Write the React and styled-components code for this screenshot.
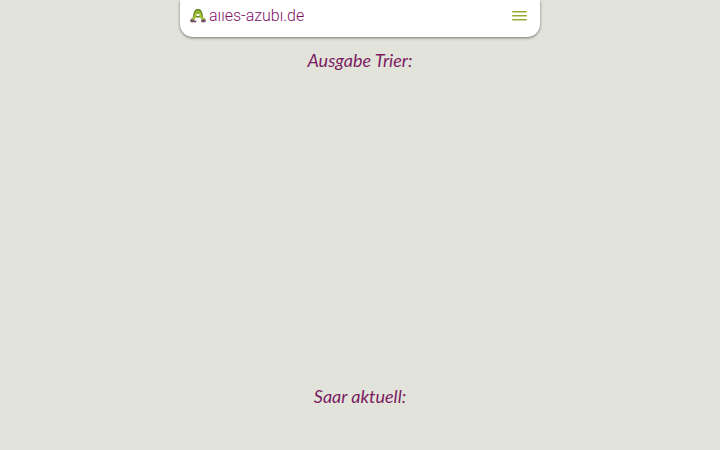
import React, { useState } from 'react';
import styled, { createGlobalStyle } from 'styled-components';

const GlobalStyle = createGlobalStyle`
  * {
    box-sizing: border-box;
  }

  body {
    margin: 0;
    background: #e2e4db;
    color: #7b1c62;
    font-family: Lato, sans-serif;
  }
`;

const Page = styled.div`
  display: flex;
  flex-direction: column;
  align-items: center;
  min-height: 100vh;
`;

const Header = styled.header`
  display: flex;
  align-items: center;
  justify-content: space-between;
  width: 50%;
  min-width: 280px;
  padding: 4px 13px 9px 10px;
  background: #fff;
  border-radius: 0 0 13px 13px;
  box-shadow: 0 1px 3px rgba(0, 0, 0, 0.5);
`;

const Brand = styled.a`
  display: flex;
  align-items: center;
  gap: 3px;
  color: #7f1169;
  text-decoration: none;
`;

const BrandName = styled.span`
  font-family: Roboto, sans-serif;
  font-size: 16px;
  font-weight: 300;
  line-height: 24px;
`;

const MenuButton = styled.button`
  display: flex;
  padding: 4px 0;
  border: none;
  background: transparent;
  color: #93ad2f;
  cursor: pointer;
`;

const Main = styled.main`
  width: 100%;
  padding-top: 11px;
`;

const Region = styled.section`
  & + & {
    margin-top: 312px;
  }
`;

const RegionTitle = styled.h2`
  margin: 0;
  font-size: 18px;
  font-style: italic;
  font-weight: 400;
  line-height: 24px;
  text-align: center;
`;

const regions = ['Ausgabe Trier:', 'Saar aktuell:'];

const LogoMark = () => (
  <svg width="16" height="14" viewBox="0 0 16 14" aria-hidden="true">
    <path d="M1 12 4 9 5 4Q6 1 8 1t3 3l1 5 3 3" fill="none" stroke="#688022" strokeWidth="2.6" strokeLinejoin="round" />
    <path d="M2 11 5 8 6 4Q7 2 8 2t2 2l1 4 3 3" fill="none" stroke="#a5c83b" strokeWidth="2" strokeLinejoin="round" />
    <path d="M6 7q2 2 4 0" fill="none" stroke="#668122" strokeWidth="1.3" />
    <circle cx="8" cy="3.5" r="1.5" fill="#82a52c" />
    <ellipse cx="2.3" cy="12" rx="2.3" ry="1.4" fill="#765069" />
    <ellipse cx="5" cy="12.5" rx="1.6" ry="1" fill="#765069" />
    <ellipse cx="13.4" cy="12" rx="2.5" ry="1.4" fill="#765069" />
  </svg>
);

const MenuIcon = () => (
  <svg width="15" height="12" viewBox="0 0 15 12" aria-hidden="true">
    <path d="M0.8 1.7h13.4M0.8 5.7h13.4M0.8 9.7h13.4" fill="none" stroke="currentColor" strokeWidth="1.6" strokeLinecap="round" />
  </svg>
);

const App = () => {
  const [menuOpen, setMenuOpen] = useState(false);

  return (
    <>
      <GlobalStyle />
      <Page>
        <Header>
          <Brand href="/" aria-label="alles-azubi.de">
            <LogoMark />
            {/* the wordmark is set with short, dotless stems */}
            <BrandName>aııes-azubı.de</BrandName>
          </Brand>
          <MenuButton
            type="button"
            aria-label="Menü"
            aria-expanded={menuOpen}
            onClick={() => setMenuOpen(!menuOpen)}
          >
            <MenuIcon />
          </MenuButton>
        </Header>
        <Main>
          {regions.map(title => (
            <Region key={title}>
              <RegionTitle>{title}</RegionTitle>
            </Region>
          ))}
        </Main>
      </Page>
    </>
  );
};

export default App;
